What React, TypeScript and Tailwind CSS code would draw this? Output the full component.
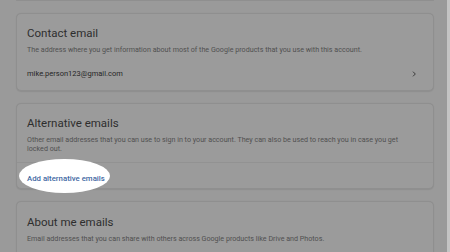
import React from "react";

function Card({ children }: { children: React.ReactNode }) {
  return (
    <section className="rounded-[5px] border border-[#8f8f8f] bg-[#9b9b9b] shadow-[0_0.5px_1px_rgba(0,0,0,0.08)]">
      {children}
    </section>
  );
}

export default function App() {
  return (
    <div
      className="flex h-[252px] w-[450px] overflow-hidden bg-[#9a9a9a]"
      style={{ fontFamily: "Roboto, 'Liberation Sans', sans-serif" }}
    >
      <div className="flex min-w-0 flex-1 flex-col gap-[12px] pl-[16px] pr-[13px]">
        <div className="h-[3px] rounded-b-[5px] border-x border-b border-[#8f8f8f] bg-[#9b9b9b]" />

        <Card>
          <div className="px-[10px] pt-[12px]">
            <h2 className="text-[11.5px] leading-[14px] text-[#2e2e2e]">Contact email</h2>
            <p className="mt-[5px] text-[7.15px] leading-[9px] text-[#505050]">
              The address where you get information about most of the Google products that you use with this account.
            </p>
          </div>
          <div className="flex items-center justify-between px-[10px] pb-[11px] pt-[15px]">
            <span className="text-[7.5px] leading-[10px] text-[#262626]">mike.person123@gmail.com</span>
            <svg width="8" height="8" viewBox="0 0 24 24" className="mr-[5px]" fill="none">
              <path d="M9 5l7 7-7 7" stroke="#3a3a3a" strokeWidth="3" />
            </svg>
          </div>
        </Card>

        <Card>
          <div className="px-[10px] pb-[9px] pt-[12px]">
            <h2 className="text-[11.5px] leading-[14px] text-[#2e2e2e]">Alternative emails</h2>
            <p className="mt-[5px] max-w-[378px] text-[7.15px] leading-[9px] text-[#505050]">
              Other email addresses that you can use to sign in to your account. They can also be used to reach you in case you get locked out.
            </p>
          </div>
          <div className="flex h-[26px] items-center border-t border-[#929292] px-[10px]">
            <span className="relative">
              <span className="absolute left-[-8px] right-[-5px] top-[-5px] bottom-[-5px] rounded-[50%] bg-white" />
              <span className="relative text-[7.8px] font-medium leading-[10px] text-[#4369a3]">
                Add alternative emails
              </span>
            </span>
          </div>
        </Card>

        <Card>
          <div className="px-[10px] pb-[14px] pt-[13px]">
            <h2 className="text-[11.5px] leading-[14px] text-[#2e2e2e]">About me emails</h2>
            <p className="mt-[5px] text-[7.15px] leading-[9px] text-[#505050]">
              Email addresses that you can share with others across Google products like Drive and Photos.
            </p>
          </div>
        </Card>
      </div>
      <div className="w-[3px] bg-[#c4c4c4]" />
    </div>
  );
}
